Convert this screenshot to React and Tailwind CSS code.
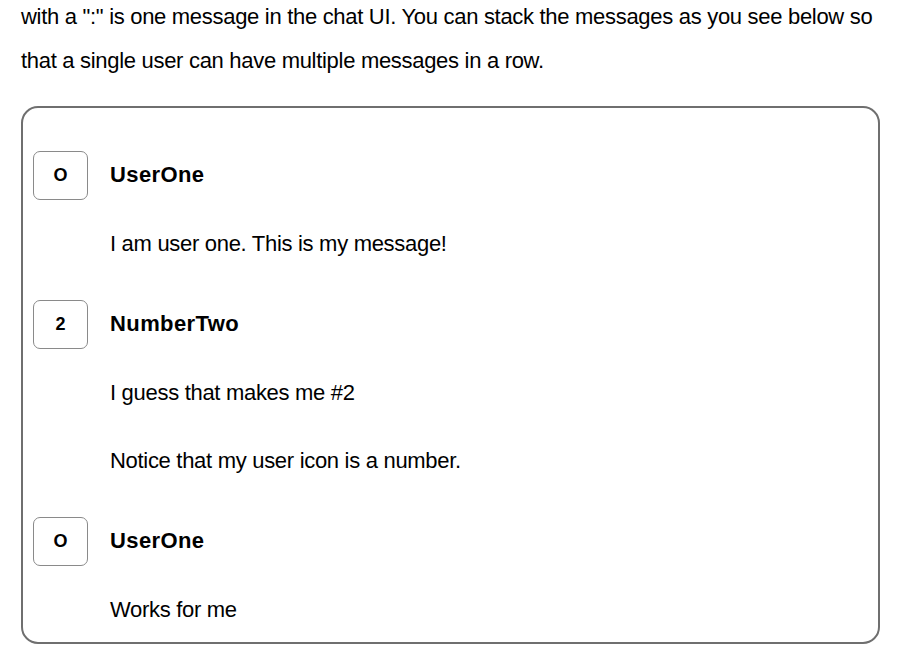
import React from 'react';

const groups = [
  { icon: 'O', name: 'UserOne', messages: ['I am user one. This is my message!'] },
  { icon: '2', name: 'NumberTwo', messages: ['I guess that makes me #2', 'Notice that my user icon is a number.'] },
  { icon: 'O', name: 'UserOne', messages: ['Works for me'] },
];

export default function App() {
  return (
    <div className="min-h-screen bg-white text-black overflow-hidden" style={{ fontFamily: '"Liberation Sans", Arial, sans-serif' }}>
      <div className="pl-[21px] pr-2">
        <p className="-mt-[5px] text-[22px] leading-[44px] tracking-[-0.3px]">
          with a &quot;:&quot; is one message in the chat UI. You can stack the messages as you see below so that a single user can have multiple messages in a row.
        </p>
      </div>

      {/* Chat box */}
      <div className="ml-[21px] mt-[23px] w-[859px] h-[538px] rounded-[17px] border-2 border-[#6f6f6f] pl-[10px] pt-[43px]">
        <div className="flex flex-col gap-[34px]">
          {groups.map((g, i) => (
            <div key={i}>
              <div className="flex items-center">
                <div className="w-[55px] h-[49px] rounded-[7px] border border-[#8a8a8a] flex items-center justify-center text-[18px] font-bold">
                  {g.icon}
                </div>
                <div className="ml-[22px] -mt-[3px] text-[22px] font-bold tracking-[0.4px]">{g.name}</div>
              </div>
              <div className="pl-[77px] pt-[22px] flex flex-col gap-[24px]">
                {g.messages.map((m, j) => (
                  <div key={j} className="text-[22px] leading-[44px] tracking-[-0.3px]">{m}</div>
                ))}
              </div>
            </div>
          ))}
        </div>
      </div>
    </div>
  );
}
